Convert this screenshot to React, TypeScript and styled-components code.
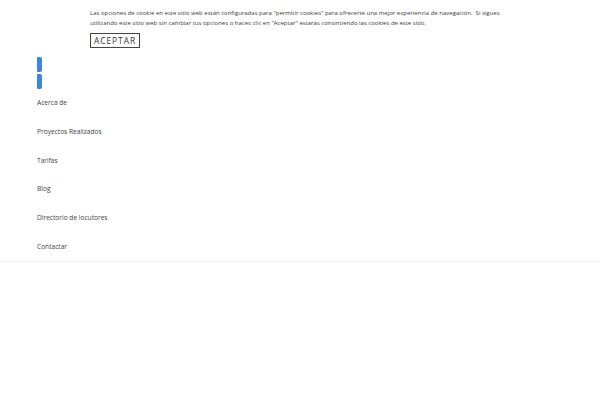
import React from 'react'
import styled, {createGlobalStyle} from 'styled-components'

const Global = createGlobalStyle`
    body {
        margin: 0;
        background: #fff;
        font-family: "Open Sans", "Liberation Sans", sans-serif;
        -webkit-font-smoothing: antialiased;
    }
`

const links = [
    'Acerca de',
    'Proyectos Realizados',
    'Tarifas',
    'Blog',
    'Directorio de locutores',
    'Contactar',
]

export default function App() {
    return (
        <>
            <Global />
            <Header>
                <CookieBar>
                    <CookieText>
                        Las opciones de cookie en este sitio web están configuradas para "permitir cookies" para ofrecerte una mejor experiencia de navegación.&nbsp; Si sigues utilizando este sitio web sin cambiar tus opciones o haces clic en "Aceptar" estarás consintiendo las cookies de este sitio.
                    </CookieText>
                    <AcceptButton>ACEPTAR</AcceptButton>
                </CookieBar>

                <Logo>
                    <LogoBar />
                    <LogoBar />
                </Logo>

                <Nav>
                    {links.map((link, idx) => {
                        return <NavLink key={idx}>{link}</NavLink>
                    })}
                </Nav>
            </Header>
        </>
    )
}

const Header = styled.div`
    position: relative;
    padding: 0 0 0 37px;
    border-bottom: 1px solid #f2f2f2;
    box-shadow: 0 1px 2px rgba(0, 0, 0, 0.04);
    height: 261px;
`

const CookieBar = styled.div`
    padding: 8px 0 0 53px;
    width: 420px;
`

const CookieText = styled.p`
    margin: 0;
    font-size: 6px;
    line-height: 10px;
    color: #3a3a3a;
`

const AcceptButton = styled.button`
    margin-top: 5px;
    display: block;
    width: 50px;
    height: 15px;
    padding: 0;
    border: 1px solid #444;
    background: #fff;
    font-family: "Open Sans", "Liberation Sans", sans-serif;
    font-size: 8.5px;
    letter-spacing: 0.9px;
    color: #333;
    line-height: 13px;
`

const Logo = styled.div`
    display: flex;
    flex-direction: column;
    gap: 2px;
    margin-top: 9px;
`

const LogoBar = styled.div`
    width: 5px;
    height: 15px;
    background: #3d86e0;
    border-radius: 1px 2px 2px 1px;
`

const Nav = styled.div`
    display: flex;
    flex-direction: column;
`

const NavLink = styled.div`
    font-size: 6.6px;
    color: #444;
    line-height: 10px;
    height: 28.8px;
    padding-top: 9px;
    box-sizing: border-box;
`
